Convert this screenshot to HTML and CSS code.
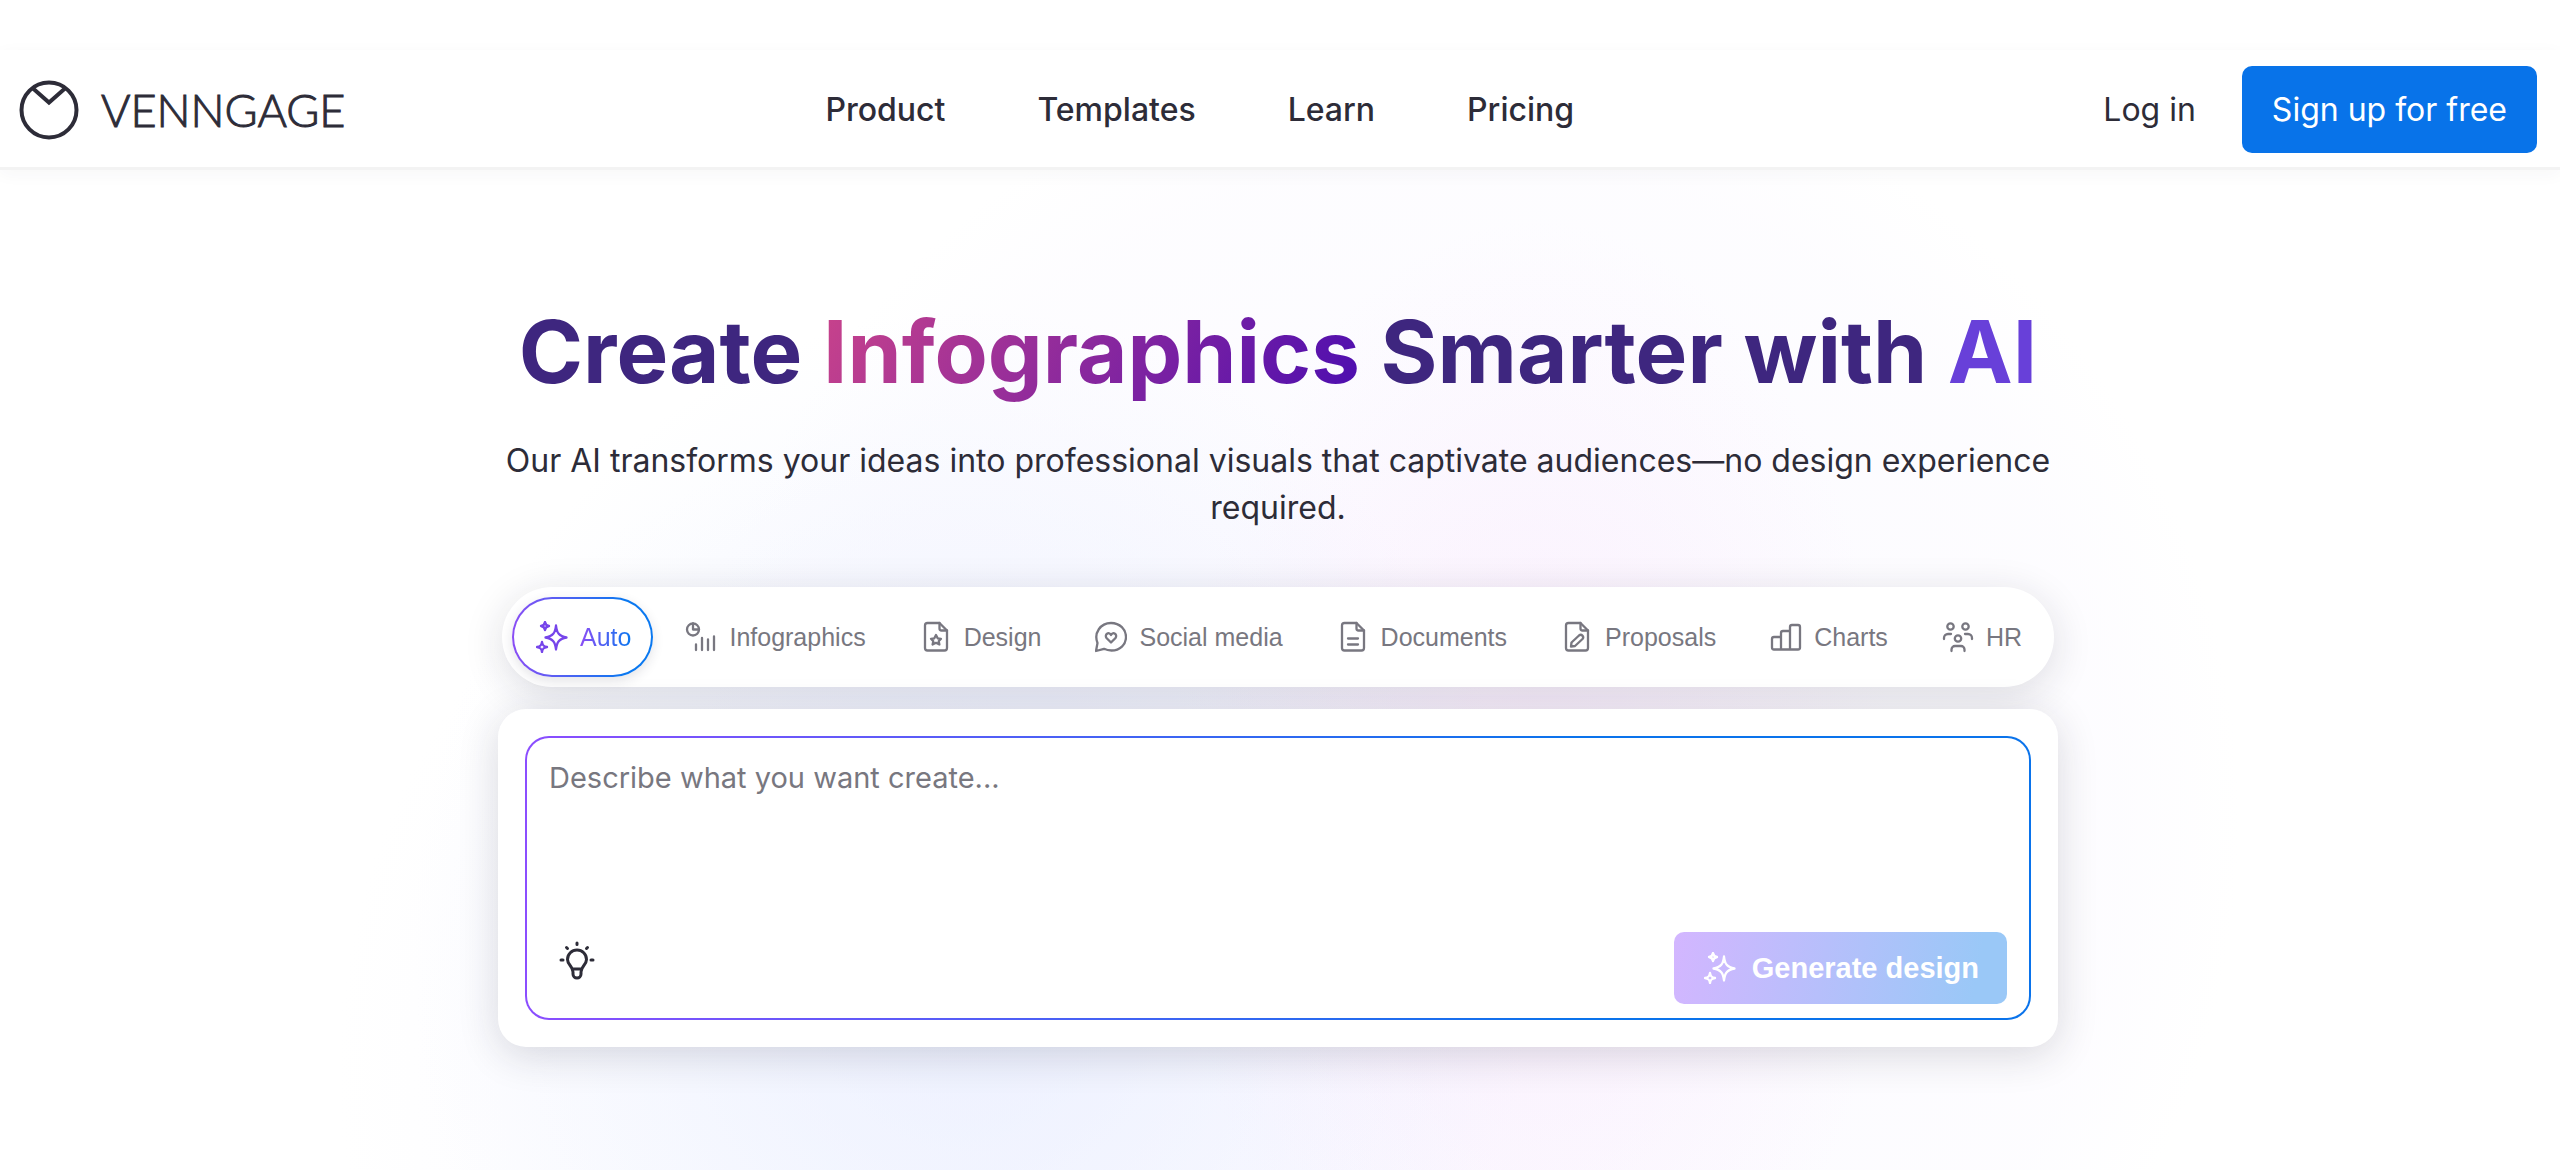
FILE: index.html
```html
<!DOCTYPE html>
<html lang="en">
<head>
    <meta charset="UTF-8">
    <meta name="viewport" content="width=device-width, initial-scale=1.0">
    <title>Venngage</title>
    <link rel="stylesheet" href="styles.css">
</head>
<body>
    <!-- shared icon shapes -->
    <svg class="sprite" aria-hidden="true">
        <symbol id="sparkles" viewBox="0 0 32 32">
            <path d="M20 4.500C20.800 12 23 15.200 30.500 16.500C23 17.800 20.800 21 20 28.500C19.200 21 17 17.800 9.500 16.500C17 15.200 19.200 12 20 4.500Z"/>
            <path d="M9 1C9.400 3.800 10.300 4.700 13 5C10.300 5.300 9.400 6.200 9 9C8.600 6.200 7.700 5.300 5 5C7.700 4.700 8.600 3.800 9 1Z"/>
            <path d="M6 21C6.500 24.400 7.600 25.500 11 26C7.600 26.500 6.500 27.600 6 31C5.500 27.600 4.400 26.500 1 26C4.400 25.500 5.500 24.400 6 21Z"/>
        </symbol>
        <symbol id="page" viewBox="0 0 32 32">
            <path d="M7.500 2H19.500L27 9.500V27A2.500 2.500 0 0 1 24.500 29.500H7.500A2.500 2.500 0 0 1 5 27V4.500A2.500 2.500 0 0 1 7.500 2Z"/>
            <path d="M19.500 2V7.500A2 2 0 0 0 21.500 9.500H27"/>
        </symbol>
    </svg>

    <header class="header">
        <a class="logo" href="#">
            <svg class="logo-mark" viewBox="0 0 60 60" aria-hidden="true">
                <circle cx="30" cy="30" r="27.500"/>
                <path d="M13.500 8L30 22.500L46.500 8"/>
            </svg>
            <span>VENNGAGE</span>
        </a>
        <nav class="menu">
            <a href="#">Product</a>
            <a href="#">Templates</a>
            <a href="#">Learn</a>
            <a href="#">Pricing</a>
        </nav>
        <div class="account">
            <a href="#">Log in</a>
            <a class="signup" href="#">Sign up for free</a>
        </div>
    </header>

    <main class="hero">
        <h1>Create <span class="topic">Infographics</span> Smarter with <span class="ai">AI</span></h1>
        <p class="lead">Our AI transforms your ideas into professional visuals that captivate audiences—no design experience required.</p>

        <div class="tabs">
            <button class="tab active" type="button">
                <svg class="icon" aria-hidden="true"><use href="#sparkles"/></svg>
                <span>Auto</span>
            </button>
            <button class="tab" type="button">
                <svg class="icon" viewBox="0 0 32 32" aria-hidden="true">
                    <circle cx="8" cy="8.500" r="6"/>
                    <path d="M8 2.500V8.500H14M11 23.500V29M17 17V29M23 18.500V29M29 15.500V29"/>
                </svg>
                <span>Infographics</span>
            </button>
            <button class="tab" type="button">
                <svg class="icon" viewBox="0 0 32 32" aria-hidden="true">
                    <use href="#page"/>
                    <path d="M16 14L17.700 17.300L21 17.800L18.700 20.200L19.400 23.500L16 21.800L12.600 23.500L13.300 20.200L11 17.800L14.300 17.300Z"/>
                </svg>
                <span>Design</span>
            </button>
            <button class="tab" type="button">
                <svg class="icon" viewBox="0 0 32 32" aria-hidden="true">
                    <path d="M1 30L2.500 22C-1.500 12 5.500 2 16 2C25 2 31 8.500 31 16C31 23.500 25 29.500 16.500 29.500C13.500 29.500 11 28.800 9 27.800Z"/>
                    <path d="M16 21.500L11.500 17C9 13.500 14 10 16 14C18 10 23 13.500 20.500 17Z"/>
                </svg>
                <span>Social media</span>
            </button>
            <button class="tab" type="button">
                <svg class="icon" viewBox="0 0 32 32" aria-hidden="true">
                    <use href="#page"/>
                    <path d="M11 17.500H21M11 23.500H21"/>
                </svg>
                <span>Documents</span>
            </button>
            <button class="tab" type="button">
                <svg class="icon" viewBox="0 0 32 32" aria-hidden="true">
                    <use href="#page"/>
                    <path d="M10 25.500L10.500 21.500L18 14.500C20.500 12.500 23.500 15.500 21.500 18L14 25Z"/>
                </svg>
                <span>Proposals</span>
            </button>
            <button class="tab" type="button">
                <svg class="icon" viewBox="0 0 32 32" aria-hidden="true">
                    <path d="M11 28.500H4A2 2 0 0 1 2 26.500V18A2 2 0 0 1 4 16H11M11 28.500V12A2 2 0 0 1 13 10H20M11 28.500H20M20 28.500V6A2 2 0 0 1 22 4H28A2 2 0 0 1 30 6V26.500A2 2 0 0 1 28 28.500H20"/>
                </svg>
                <span>Charts</span>
            </button>
            <button class="tab" type="button">
                <svg class="icon" viewBox="0 0 32 32" aria-hidden="true">
                    <circle cx="8.500" cy="5.500" r="3.200"/>
                    <circle cx="23.500" cy="5.500" r="3.200"/>
                    <circle cx="16" cy="17.500" r="3.200"/>
                    <path d="M2 18V17A4 4 0 0 1 6 13H9M30 18V17A4 4 0 0 0 26 13H23M9.500 30V28.500A3.500 3.500 0 0 1 13 25H19A3.500 3.500 0 0 1 22.500 28.500V30"/>
                </svg>
                <span>HR</span>
            </button>
        </div>

        <form class="card">
            <div class="prompt">
                <textarea aria-label="Design description" placeholder="Describe what you want create..."></textarea>
                <div class="prompt-actions">
                    <button class="idea" type="button" aria-label="Get an idea">
                        <svg viewBox="0 0 40 40" aria-hidden="true">
                            <path d="M16 32C16 26 10.500 25 10.500 19.500A9.500 9.500 0 0 1 29.500 19.500C29.500 25 24 26 24 32V34A4 4 0 0 1 16 34ZM15.500 29H24.500"/>
                            <path d="M20 3V4.500M9.500 7.500L10.500 8.500M30.500 7.500L29.500 8.500M4 20H6M34 20H36"/>
                        </svg>
                    </button>
                    <button class="generate" type="button">
                        <svg class="icon" aria-hidden="true"><use href="#sparkles"/></svg>
                        <span>Generate design</span>
                    </button>
                </div>
            </div>
        </form>
    </main>
</body>
</html>
```
FILE: styles.css
```css
* {
  box-sizing: border-box;
}
body {
  margin: 0;
  min-height: 100vh;
  display: flex;
  flex-direction: column;
  font-family: Inter, "Liberation Sans", sans-serif;
  font-size: 32px;
  color: #2d2c38;
  background: #fff;
}
a {
  color: inherit;
  text-decoration: none;
}
button {
  font-family: "Liberation Sans", Arial, sans-serif;
  border: 0;
  background: none;
  cursor: pointer;
}
svg {
  display: block;
  fill: none;
  stroke: currentColor;
  stroke-linecap: round;
  stroke-linejoin: round;
}
.sprite {
  position: absolute;
  width: 0;
  height: 0;
}
.icon {
  width: 32px;
  height: 32px;
  stroke-width: 2.3;
}

/* header */
.header {
  position: relative;
  display: flex;
  align-items: center;
  margin-top: 50px;
  height: 120px;
  padding: 2px 23px 0 19px;
  background: #fff;
  border-bottom: 3px solid #f3f3f3;
  box-shadow: 0 4px 16px rgba(40, 40, 70, 0.04);
}
.logo {
  display: flex;
  align-items: center;
  gap: 22px;
  width: 328px;
  line-height: 60px;
  font-family: Lato, sans-serif;
  font-size: 45px;
  font-weight: 300;
  -webkit-text-stroke: 1px currentColor;
}
.logo-mark {
  width: 60px;
  height: 60px;
  stroke-width: 4;
  stroke-linecap: butt;
  stroke-linejoin: miter;
}
.menu {
  display: flex;
  gap: 92px;
  margin-left: 19%;
  font-weight: 500;
}
.account {
  display: flex;
  align-items: center;
  gap: 46px;
  margin-left: auto;
}
.signup {
  padding: 24px 30px;
  line-height: 39px;
  color: #fff;
  background: #0873e9;
  border-radius: 10px;
}

/* hero */
.hero {
  flex: 1;
  display: flex;
  flex-direction: column;
  align-items: center;
  padding: 129px 4px 122px 0;
  background:
    radial-gradient(ellipse 360px 600px at 60% 65%, rgba(250, 228, 252, 0.5), rgba(250, 232, 254, 0)),
    radial-gradient(ellipse 560px 640px at 38% 78%, rgba(224, 232, 255, 0.55), rgba(230, 238, 255, 0)),
    radial-gradient(circle 780px at 57% 65%, rgba(249, 248, 255, 0.8), rgba(252, 251, 255, 0.6) 85%, rgba(255, 255, 255, 0)),
    radial-gradient(circle 660px at 39% 90%, rgba(247, 248, 255, 0.6), rgba(252, 252, 255, 0.6) 80%, rgba(255, 255, 255, 0));
}
h1 {
  margin: 0;
  font-size: 87px;
  line-height: 106px;
  font-weight: 700;
  color: #3e267f;
}
.topic {
  color: transparent;
  background: linear-gradient(120deg, #c9438b, #4b0db0);
  -webkit-background-clip: text;
  background-clip: text;
}
.ai {
  color: #6840d9;
}
.lead {
  max-width: 1560px;
  margin: 32px 0 56px;
  line-height: 47px;
  text-align: center;
}

/* categories */
.tabs {
  display: flex;
  gap: 8px;
  padding: 10px;
  background: #fff;
  border-radius: 50px;
  box-shadow: 0 8px 40px rgba(30, 30, 50, 0.14);
}
.tab {
  display: flex;
  align-items: center;
  gap: 12px;
  height: 80px;
  padding: 0 20px 0 22px;
  border: 2px solid transparent;
  border-radius: 40px;
  font-size: 25px;
  color: #787780;
}
.tab.active {
  color: #7645ea;
  background:
    linear-gradient(#fff, #fff) padding-box,
    linear-gradient(90deg, #8b4df5, #0a78f0 80%) border-box;
  box-shadow: 0 4px 12px rgba(30, 30, 60, 0.12);
}
.active span {
  color: transparent;
  background: linear-gradient(90deg, #8b4df5, #0a78f0);
  -webkit-background-clip: text;
  background-clip: text;
}

/* prompt box */
.card {
  width: 1560px;
  max-width: 100%;
  margin-top: 22px;
  padding: 27px;
  background: #fff;
  border-radius: 28px;
  box-shadow: 0 8px 40px rgba(30, 30, 50, 0.16);
}
.prompt {
  padding: 22px 22px 14px;
  border: 2px solid transparent;
  border-radius: 24px;
  background:
    linear-gradient(#fff, #fff) padding-box,
    linear-gradient(90deg, #8b4dff, #0a73eb 70%) border-box;
}
textarea {
  display: block;
  width: 100%;
  height: 172px;
  padding: 0;
  border: 0;
  outline: 0;
  resize: none;
  background: none;
  color: inherit;
  font-family: Inter, sans-serif;
  font-size: 29px;
  line-height: 36px;
}
textarea::placeholder {
  color: #78777f;
}
.prompt-actions {
  display: flex;
  justify-content: space-between;
}
.idea {
  padding: 8px;
  align-self: flex-start;
  color: inherit;
}
.idea svg {
  width: 40px;
  height: 40px;
  stroke-width: 3;
}
.generate {
  display: flex;
  align-items: center;
  gap: 16px;
  height: 72px;
  padding: 0 28px 0 30px;
  border-radius: 10px;
  font-size: 29px;
  font-weight: 700;
  color: #fff;
  background: linear-gradient(100deg, #d3b6ff, #9ac8f7 90%);
}
```
